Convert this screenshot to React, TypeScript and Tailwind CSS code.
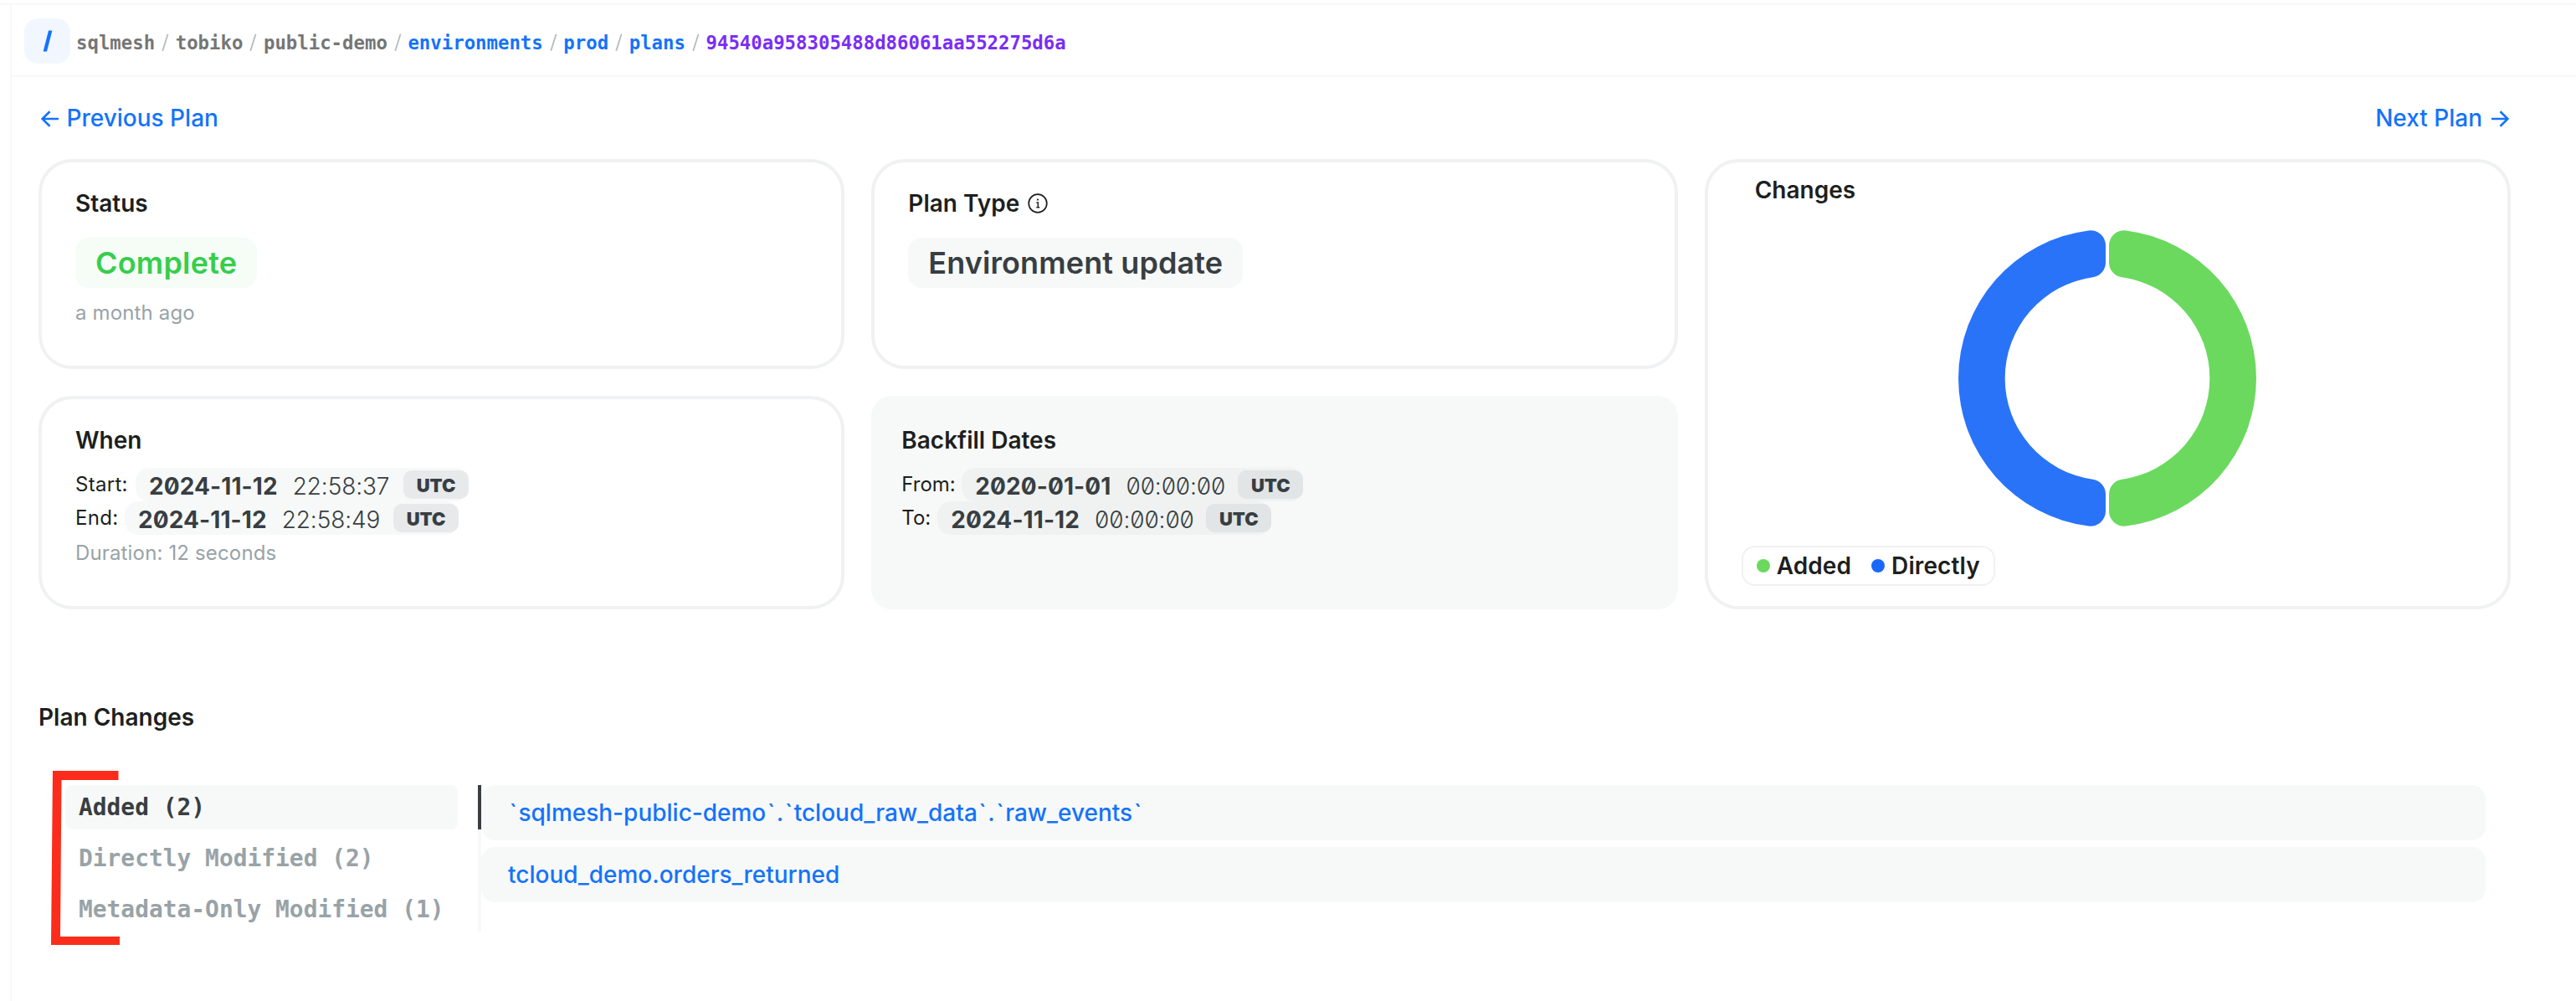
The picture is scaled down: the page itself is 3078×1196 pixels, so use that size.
import React from "react";

const crumbs = [
  { label: "sqlmesh", color: "text-[#757676]" },
  { label: "tobiko", color: "text-[#757676]" },
  { label: "public-demo", color: "text-[#757676]" },
  { label: "environments", color: "text-[#1473fb]" },
  { label: "prod", color: "text-[#1473fb]" },
  { label: "plans", color: "text-[#1473fb]" },
  { label: "94540a958305488d86061aa552275d6a", color: "text-[#7a2df5]" },
];

const tabs = [
  { label: "Added (2)", active: true },
  { label: "Directly Modified (2)", active: false },
  { label: "Metadata-Only Modified (1)", active: false },
];

const models = [
  "`sqlmesh-public-demo`.`tcloud_raw_data`.`raw_events`",
  "tcloud_demo.orders_returned",
];

function Arrow({ flip = false }: { flip?: boolean }) {
  return (
    <svg
      viewBox="0 0 22 20"
      className={flip ? "h-5 w-[22px] -scale-x-100" : "h-5 w-[22px]"}
      fill="none"
      stroke="currentColor"
      strokeWidth="2.6"
    >
      <path d="M1 10H20.5M11.5 1.2L20.5 10L11.5 18.8" />
    </svg>
  );
}

function InfoIcon() {
  return (
    <svg viewBox="0 0 24 24" className="h-6 w-6" fill="none" stroke="currentColor">
      <circle cx="12" cy="12" r="10.8" strokeWidth="1.7" />
      <path d="M10.4 11H12.3V16.6M10.4 16.8H14.2" strokeWidth="1.4" />
      <circle cx="12" cy="7.6" r="1.1" fill="currentColor" stroke="none" />
    </svg>
  );
}

function Title({ children }: { children: React.ReactNode }) {
  return (
    <h2 className="flex h-[42px] items-center text-[28px] leading-[42px] font-semibold text-[#1d1f20]">
      {children}
    </h2>
  );
}

function Stamp({
  label,
  labelClass,
  date,
  time,
  pill,
  badge,
}: {
  label: string;
  labelClass: string;
  date: string;
  time: string;
  pill: string;
  badge: string;
}) {
  return (
    <div className="flex h-10 items-center">
      <span className={`text-[24px] leading-9 whitespace-nowrap text-[#1d1f20] ${labelClass}`}>{label}</span>
      <span
        className={`ml-2 flex h-10 items-center rounded-2xl pl-4 text-[28px] leading-9 text-[#383e42] ${pill}`}
      >
        <span className="pt-[3px] font-bold tracking-[0.1px] [font-feature-settings:'zero']">{date}</span>
        <span className="ml-[18px] pt-[3px] font-light tracking-[-0.1px] [font-feature-settings:'zero']">{time}</span>
        <span
          className={`ml-auto flex h-[34px] w-[78px] items-center justify-center rounded-[10px] pt-px text-[22px] font-black ${badge}`}
        >
          UTC
        </span>
      </span>
    </div>
  );
}

/* Backticks get a little room on both sides so the quoted parts stay legible. */
function ModelName({ name }: { name: string }) {
  return (
    <span>
      {name.split(/(`)/).map((part, i) =>
        part === "`" ? (
          <span key={i} className="px-[1.5px]">
            {part}
          </span>
        ) : (
          part
        ),
      )}
    </span>
  );
}

function Donut() {
  const half =
    "M2 -158.7A18 18 0 0 1 22.25 -176.6A178 178 0 0 1 22.25 176.6A18 18 0 0 1 2 158.7L2 138.6A18 18 0 0 1 17.4 120.8A122 122 0 0 0 17.4 -120.8A18 18 0 0 1 2 -138.6Z";
  return (
    <svg viewBox="-180 -180 360 360" className="h-[360px] w-[360px]">
      <path d={half} fill="#6ad95e" />
      <path d={half} fill="#2973f9" transform="scale(-1 1)" />
    </svg>
  );
}

export default function App() {
  return (
    <div className="h-[1196px] w-full overflow-hidden bg-white pt-1 font-['Inter',sans-serif]">
      <div className="h-full border-t-2 border-[#f8f8f9] pl-3">
        <div className="h-full border-l-2 border-[#f8f8f9]">
          <header className="flex h-[86px] items-center border-b-2 border-[#f8f8f9] pt-[2px] pl-[15px]">
            <div className="flex h-[54px] w-[55px] items-center justify-center rounded-2xl bg-[#f2f7ff]">
              <svg viewBox="0 0 12 26" className="h-[26px] w-3 text-[#1473fb]" fill="currentColor">
                <path d="M0.6 25.4L7 0.4H11.4L5 25.4Z" />
              </svg>
            </div>
            <nav className="ml-[7px] flex items-center pt-1 font-['DejaVu_Sans_Mono',monospace] text-[22.33px] leading-8 font-bold">
              {crumbs.map((c, i) => (
                <React.Fragment key={c.label}>
                  {i > 0 && (
                    <svg viewBox="0 0 25 32" className="h-8 w-[24.6px]" stroke="#b3bbbf" strokeWidth="1.8">
                      <path d="M9.4 26L15.8 5.6" />
                    </svg>
                  )}
                  <span className={c.color}>{c.label}</span>
                </React.Fragment>
              ))}
            </nav>
          </header>

          <main className="pr-[78px] pl-8">
            <div className="flex h-[98px] items-center justify-between text-[28px] leading-[42px] font-medium text-[#1473fb]">
              <a className="flex items-center gap-[9px] pl-[2.5px]">
                <span className="pt-px">
                  <Arrow flip />
                </span>
                Previous Plan
              </a>
              <a className="flex items-center gap-[9.5px] pr-[2.5px]">
                Next Plan
                <span className="pt-px">
                  <Arrow />
                </span>
              </a>
            </div>

            <div className="grid grid-cols-3 grid-rows-[251px_255px] gap-8">
              <section className="rounded-[40px] border-4 border-[#f0f1f2] px-10 pt-7">
                <Title>Status</Title>
                <div className="mt-5 flex h-[60px] w-fit items-center rounded-2xl bg-[#f5fdf6] px-6 text-[36px] font-semibold tracking-[0.2px] text-[#37cd4e]">
                  Complete
                </div>
                <p className="mt-3 text-[24px] leading-9 tracking-[0.15px] text-[#98a3a7]">a month ago</p>
              </section>

              <section className="rounded-[40px] border-4 border-[#f0f1f2] px-10 pt-7">
                <Title>
                  <span className="mr-[10px]">Plan Type</span>
                  <InfoIcon />
                </Title>
                <div className="mt-5 flex h-[60px] w-fit items-center rounded-2xl bg-[#f7f9f8] px-6 text-[36px] font-semibold tracking-[0.1px] text-[#383e42]">
                  Environment update
                </div>
              </section>

              <section className="row-span-2 flex flex-col rounded-[40px] border-4 border-[#f0f1f2] px-10 pt-3">
                <div className="pl-4">
                  <Title>Changes</Title>
                </div>
                <div className="mt-6 flex justify-center">
                  <Donut />
                </div>
                <div className="mt-5 flex h-12 w-fit items-center rounded-2xl border-2 border-[#f0f1f2] px-4 text-[28px] leading-9 font-semibold tracking-[0.1px] text-[#1d1f20]">
                  <i className="mr-2 h-4 w-4 rounded-full bg-[#6ad95e]" />
                  Added
                  <i className="mr-2 ml-6 h-4 w-4 rounded-full bg-[#1a68fa]" />
                  Directly
                </div>
              </section>

              <section className="rounded-[40px] border-4 border-[#f0f1f2] px-10 pt-7">
                <Title>When</Title>
                <div className="mt-3">
                  <Stamp label="Start:" labelClass="w-16 tracking-[0.3px]" date="2024-11-12" time="22:58:37" pill="w-[398px] bg-[#f7f9f8]" badge="bg-[#e8e9eb]" />
                  <Stamp label="End:" labelClass="w-[51px] tracking-[0.3px]" date="2024-11-12" time="22:58:49" pill="w-[399px] bg-[#f7f9f8]" badge="bg-[#e8e9eb]" />
                </div>
                <p className="mt-1 text-[24px] leading-9 tracking-[0.15px] text-[#98a3a7]">Duration: 12 seconds</p>
              </section>

              <section className="rounded-3xl bg-[#f7f9f8] px-9 pt-8">
                <Title>Backfill Dates</Title>
                <div className="mt-3">
                  <Stamp label="From:" labelClass="w-16" date="2020-01-01" time="00:00:00" pill="w-[408px] bg-[#f0f2f1]" badge="bg-[#e2e5e6]" />
                  <Stamp label="To:" labelClass="w-[35px]" date="2024-11-12" time="00:00:00" pill="w-[399px] bg-[#f0f2f1]" badge="bg-[#e2e5e6]" />
                </div>
              </section>
            </div>

            <div className="mt-[108px]">
              <Title>Plan Changes</Title>
            </div>

            <div className="relative mt-[60px] flex pr-[30px] pl-8">
              <svg
                viewBox="0 0 84 210"
                className="absolute -top-[18px] left-[14px] h-[210px] w-[84px]"
                fill="#fb2c1b"
              >
                <path d="M3 1H81.5V12H13.5L12 199H83V209H1Z" />
              </svg>
              <ul className="flex w-[469px] flex-col gap-2 font-['DejaVu_Sans_Mono',monospace] text-[27.9px] leading-[53px] font-bold">
                {tabs.map((t) => (
                  <li
                    key={t.label}
                    className={
                      t.active
                        ? "h-[53px] rounded-lg bg-[#f7f9f8] pl-4 whitespace-nowrap text-[#383e42]"
                        : "h-[53px] pl-4 whitespace-nowrap text-[#98a3a7]"
                    }
                  >
                    {t.label}
                  </li>
                ))}
              </ul>
              <div className="ml-6 h-[175px] w-1 bg-[#f7f8f8]">
                <div className="h-[53px] bg-[#383e42]" />
              </div>
              <ul className="flex flex-1 flex-col gap-2">
                {models.map((m) => (
                  <li
                    key={m}
                    className="flex h-[66px] items-center rounded-2xl bg-[#f7f9f8] pl-8 text-[28px] font-medium text-[#1473fb]"
                  >
                    <ModelName name={m} />
                  </li>
                ))}
              </ul>
            </div>
          </main>
        </div>
      </div>
    </div>
  );
}
